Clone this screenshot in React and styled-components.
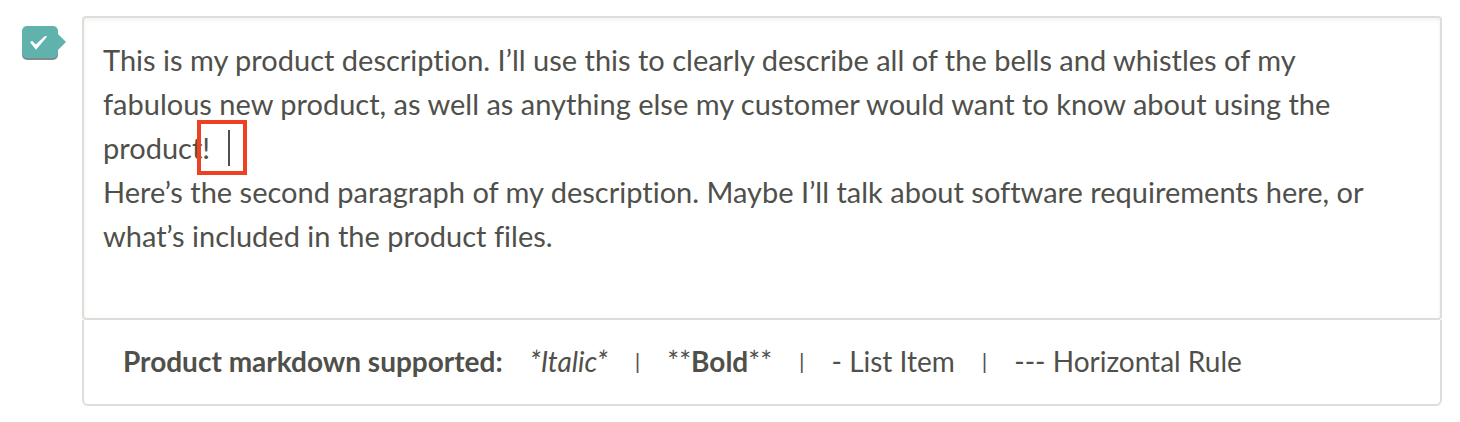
import React from "react";
import styled, { createGlobalStyle } from "styled-components";

const GlobalStyle = createGlobalStyle`
  *, *::before, *::after { box-sizing: border-box; }
  body {
    margin: 0;
    background: #fff;
    color: #50504b;
    font-family: Lato, "Open Sans", sans-serif;
    font-variant-ligatures: none;
  }
`;

const Field = styled.main`
  display: flex;
  align-items: flex-start;
  gap: 16px;
  padding: 16px 18px 16px 22px;
`;

const Status = styled.svg`
  flex: none;
  width: 44px;
  height: 34px;
  margin-top: 10px;
`;

const Editor = styled.section`
  flex: 1;
  min-width: 0;
`;

const InputArea = styled.div`
  position: relative;
  display: flex;
`;

const Description = styled.textarea`
  display: block;
  width: 100%;
  margin: 0;
  padding: 20px 19px 16px;
  border: 2px solid #deded9;
  border-radius: 4px;
  outline: 0;
  resize: none;
  overflow: hidden;
  background: #fff;
  box-shadow: inset 0 2px 4px rgba(0, 0, 0, 0.06);
  color: inherit;
  font-family: inherit;
  font-variant-ligatures: none;
  font-size: 29px;
  line-height: 44px;
`;

const CaretHighlight = styled.div`
  position: absolute;
  top: 104px;
  left: 115px;
  display: flex;
  justify-content: flex-end;
  width: 50px;
  height: 55px;
  padding: 6px 13px 5px;
  border: 4px solid #ee4023;
  pointer-events: none;
`;

const Caret = styled.span`
  width: 2px;
  height: 36px;
  background: #50504b;
`;

const Hints = styled.footer`
  display: flex;
  flex-wrap: wrap;
  align-items: center;
  gap: 27px;
  padding: 21px 39px 23px;
  border: solid #deded9;
  border-width: 0 2px 2px;
  border-radius: 0 0 6px 6px;
  font-size: 28px;
  line-height: 40px;
`;

const HintTitle = styled.strong`
  font-weight: 700;
`;

const Divider = styled.span`
  font-size: 22px;
`;

const text = `This is my product description. I’ll use this to clearly describe all of the bells and whistles of my
fabulous new product, as well as anything else my customer would want to know about using the
product!
Here’s the second paragraph of my description. Maybe I’ll talk about software requirements here, or
what’s included in the product files.`;

export default function App() {
  return (
    <>
      <GlobalStyle />
      <Field>
        <Status viewBox="0 0 44 34" role="img" aria-label="Complete">
          <rect y="2" width="36" height="32" rx="5" fill="#7f8c89" />
          <rect width="36" height="32" rx="5" fill="#5fb3ac" />
          <path d="M36 8L44 16L36 24Z" fill="#5fb3ac" />
          <path d="M8 16.2L10 14.8L13.8 18.6L23 10L25.2 10.6L14 23.8Z" fill="#fff" />
        </Status>
        <Editor>
          <InputArea>
            <Description
              aria-label="Product description"
              rows={6}
              spellCheck={false}
              defaultValue={text}
            />
            <CaretHighlight>
              <Caret />
            </CaretHighlight>
          </InputArea>
          <Hints>
            <HintTitle>Product markdown supported:</HintTitle>
            <em>*Italic*</em>
            <Divider>|</Divider>
            <span>**<b>Bold</b>**</span>
            <Divider>|</Divider>
            <span>- List Item</span>
            <Divider>|</Divider>
            <span>--- Horizontal Rule</span>
          </Hints>
        </Editor>
      </Field>
    </>
  );
}
